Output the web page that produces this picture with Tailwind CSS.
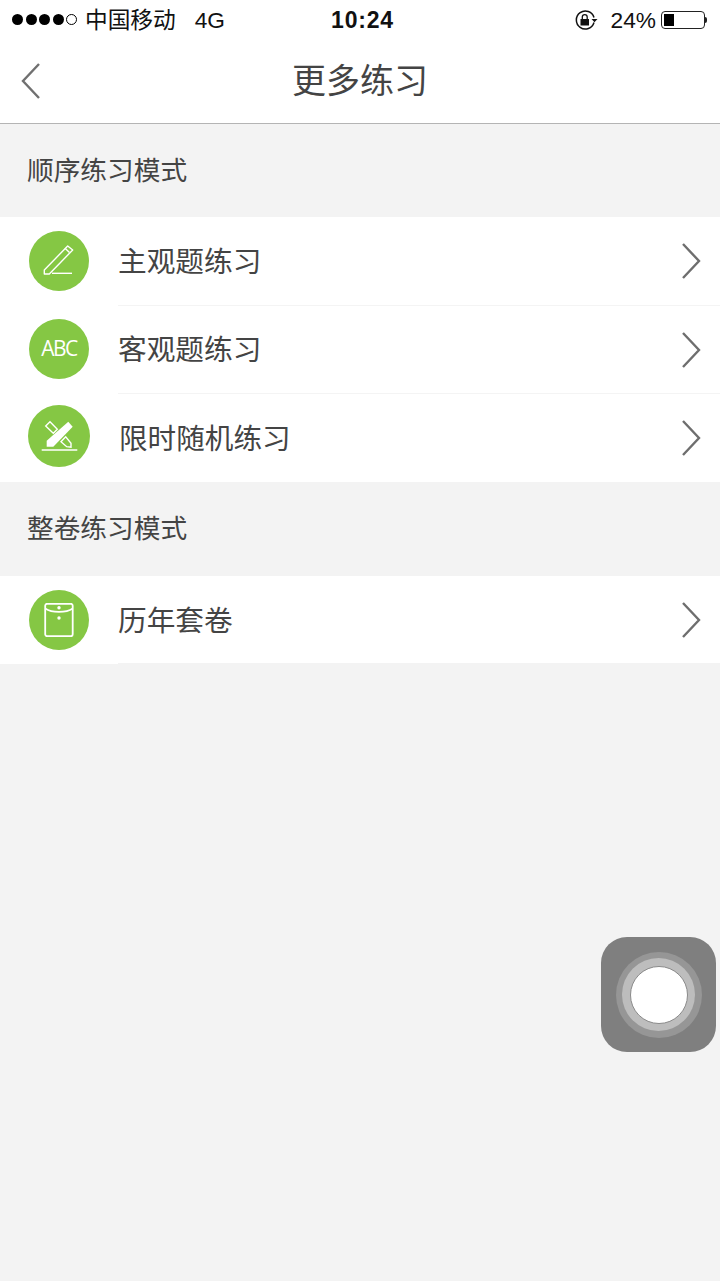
<!DOCTYPE html>
<html lang="zh-CN">
<head>
    <meta charset="UTF-8">
    <meta name="viewport" content="width=device-width, initial-scale=1.0">
    <title>更多练习</title>
    <script src="https://cdn.jsdelivr.net/npm/@tailwindcss/browser@4"></script>
</head>
<body class="bg-[#f3f3f3] font-['Liberation_Sans','Noto_Sans_CJK_SC',sans-serif]">
<div class="relative w-[720px] h-[1281px] overflow-hidden bg-[#f3f3f3]">

    <!-- status bar -->
    <div class="h-[40px] bg-white flex items-center justify-between pl-[12px] pr-[13px] text-[22.7px] text-[#111]">
        <div class="flex items-center w-[260px]">
            <div class="flex gap-[2.5px] items-center">
                <span class="w-[11px] h-[11px] rounded-full bg-black"></span>
                <span class="w-[11px] h-[11px] rounded-full bg-black"></span>
                <span class="w-[11px] h-[11px] rounded-full bg-black"></span>
                <span class="w-[11px] h-[11px] rounded-full bg-black"></span>
                <span class="w-[11px] h-[11px] rounded-full border border-black"></span>
            </div>
            <span class="ml-[8px]">中国移动</span>
            <span class="ml-[19px]">4G</span>
        </div>
        <div class="font-bold text-[23px] tracking-[0.8px] ml-[6px]">10:24</div>
        <div class="flex items-center justify-end w-[260px]">
            <svg class="w-[24px] h-[22px]" viewBox="0 0 24 22" fill="none">
                <path d="M20 8.5A9 9 0 1 0 20 13.5" stroke="#111" stroke-width="1.5"/>
                <path d="M17.5 10h6l-3 3.2z" fill="#111"/>
                <rect x="6.5" y="10" width="8.5" height="6.5" fill="#111"/>
                <path d="M8.3 10V8a2.4 2.4 0 0 1 4.9 0v2" stroke="#111" stroke-width="1.3"/>
            </svg>
            <span class="ml-[13px]">24%</span>
            <div class="ml-[5px] w-[44px] h-[18px] border border-[#222] rounded-[4px] p-[2px]">
                <div class="w-[10px] h-full bg-black"></div>
            </div>
            <div class="w-[2px] h-[6px] bg-[#222] rounded-r-full"></div>
        </div>
    </div>

    <!-- nav -->
    <div class="relative h-[84px] bg-white border-b border-[#b4b4b4] flex items-center justify-center">
        <svg class="absolute left-[20px] top-[22px] w-[22px] h-[38px]" viewBox="0 0 22 38" fill="none">
            <path d="M19 2 3 19l16 17" stroke="#707070" stroke-width="2.4"/>
        </svg>
        <h1 class="text-[34px] leading-none text-[#444] mt-[-2px]">更多练习</h1>
    </div>

    <!-- 顺序练习 -->
    <div class="h-[93px] flex items-center pl-[27px] pt-[1px] text-[26.7px] text-[#444]">顺序练习模式</div>
    <div class="bg-white">
        <div class="h-[89px] flex">
            <div class="w-[118px] shrink-0 flex items-center pl-[29px] pb-[1px]">
                <div class="w-[60px] h-[60px] rounded-full bg-[#85c744] flex items-center justify-center">
                    <svg class="w-[32px] h-[32px]" viewBox="0 0 32 32" fill="none" stroke="#fff" stroke-width="1.4" stroke-linejoin="round">
                        <path d="M1.300 25 24.700 1l5 4L6.300 29h-5z"/>
                        <path d="M22 3.300l4.500 4.200"/>
                        <path d="M9 28.300h20"/>
                    </svg>
                </div>
            </div>
            <div class="flex-1 flex items-center justify-between pr-[19px] border-b border-[#f4f4f4]">
                <span class="pt-[3px] text-[28.7px] text-[#444]">主观题练习</span>
                <svg class="w-[20px] h-[38px]" viewBox="0 0 20 38" fill="none"><path d="M2 2l16 17L2 36" stroke="#6e6e6e" stroke-width="2.4"/></svg>
            </div>
        </div>
        <div class="h-[88px] flex">
            <div class="w-[118px] shrink-0 flex items-center pl-[29px] pb-[2px]">
                <div class="w-[60px] h-[60px] rounded-full bg-[#85c744] flex items-center justify-center font-['Open_Sans',sans-serif] text-[21px] tracking-[-1.5px] text-white">ABC</div>
            </div>
            <div class="flex-1 flex items-center justify-between pr-[19px] border-b border-[#f4f4f4]">
                <span class="pt-[3px] text-[28.7px] text-[#444]">客观题练习</span>
                <svg class="w-[20px] h-[38px]" viewBox="0 0 20 38" fill="none"><path d="M2 2l16 17L2 36" stroke="#6e6e6e" stroke-width="2.4"/></svg>
            </div>
        </div>
        <div class="h-[88px] flex">
            <div class="w-[118px] shrink-0 flex items-center pl-[28px] pb-[4px]">
                <div class="w-[62px] h-[62px] rounded-full bg-[#85c744] flex items-center justify-center">
                    <svg class="w-[38px] h-[34px]" viewBox="0 0 38 34" fill="none">
                        <path d="M6.700 21.700 28.300 2.700l4.400 5-19.400 20H6.700z" fill="#fff"/>
                        <path d="M5.700 7 10 2.700l7.300 7.600-4 4zM21 22.700l4.700-5 5.300 6.600v4l-4.300-.6z" stroke="#fff" stroke-width="1.400"/>
                        <path d="M1.700 31h35.600" stroke="#fff" stroke-width="1.600"/>
                    </svg>
                </div>
            </div>
            <div class="flex-1 flex items-center justify-between pr-[19px]">
                <span class="pl-[1px] pt-[2px] text-[28.6px] text-[#444]">限时随机练习</span>
                <svg class="w-[20px] h-[38px]" viewBox="0 0 20 38" fill="none"><path d="M2 2l16 17L2 36" stroke="#6e6e6e" stroke-width="2.4"/></svg>
            </div>
        </div>
    </div>

    <!-- 整卷练习 -->
    <div class="h-[94px] flex items-center pl-[27px] pt-[1px] text-[26.7px] text-[#444]">整卷练习模式</div>
    <div class="bg-white">
        <div class="h-[88px] flex">
            <div class="w-[118px] shrink-0 flex items-center pl-[29px]">
                <div class="w-[60px] h-[60px] rounded-full bg-[#85c744] flex items-center justify-center">
                    <svg class="w-[30px] h-[34px]" viewBox="0 0 30 34" fill="none" stroke="#fff" stroke-width="1.800">
                        <rect x="1.200" y="0.800" width="27.500" height="32.400" rx="2"/>
                        <path d="M1.200 5.500C8 10 22 10 28.700 5.500"/>
                        <circle cx="15" cy="4.700" r="1.700" fill="#fff" stroke="none"/>
                        <circle cx="15" cy="15" r="1.700" fill="#fff" stroke="none"/>
                    </svg>
                </div>
            </div>
            <div class="flex-1 flex items-center justify-between pr-[19px] border-b border-[#f3f3f3]">
                <span class="pt-[4px] text-[28.7px] text-[#444]">历年套卷</span>
                <svg class="w-[20px] h-[38px]" viewBox="0 0 20 38" fill="none"><path d="M2 2l16 17L2 36" stroke="#6e6e6e" stroke-width="2.4"/></svg>
            </div>
        </div>
    </div>

    <!-- assistive touch -->
    <div class="absolute left-[601px] top-[937px] w-[115px] h-[115px] rounded-[26px] bg-[#7f7f7f] flex items-center justify-center">
        <div class="w-[86px] h-[86px] rounded-full bg-[#969696] flex items-center justify-center">
            <div class="w-[73px] h-[73px] rounded-full bg-[#bdbdbd] flex items-center justify-center">
                <div class="w-[58px] h-[58px] rounded-full bg-white border border-[#8a8a8a]"></div>
            </div>
        </div>
    </div>
</div>
</body>
</html>
